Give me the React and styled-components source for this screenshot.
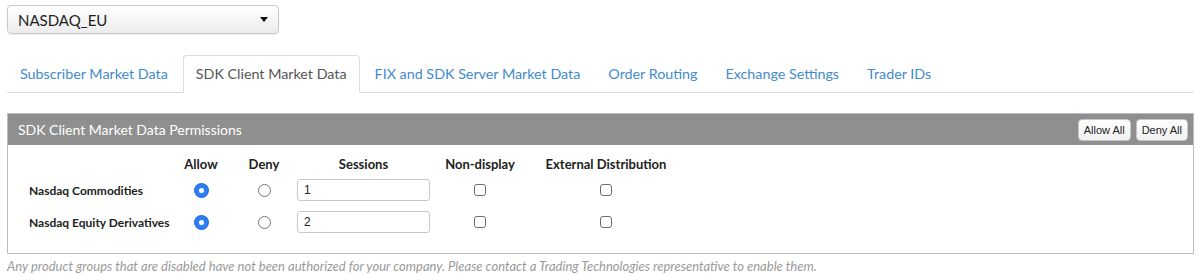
import React, { useState } from "react";
import styled, { createGlobalStyle } from "styled-components";

const GlobalStyle = createGlobalStyle`
  body {
    margin: 0;
    background: #fff;
    font-family: Lato, "Open Sans", sans-serif;
    color: #333;
  }
`;

const Page = styled.div`
  padding: 5px 5px 0 7px;
`;

const Select = styled.div`
  width: 272px;
  height: 29px;
  box-sizing: border-box;
  border: 1px solid #c8c8c8;
  border-radius: 4px;
  background: linear-gradient(#ffffff, #ececec);
  box-shadow: 0 1px 1px rgba(0, 0, 0, 0.08);
  display: flex;
  align-items: center;
  justify-content: space-between;
  padding: 0 10px 0 10px;
  font-size: 15px;
  color: #222;
`;

const Caret = styled.span`
  width: 0;
  height: 0;
  border-left: 4.5px solid transparent;
  border-right: 4.5px solid transparent;
  border-top: 5px solid #111;
`;

const Tabs = styled.ul`
  list-style: none;
  margin: 21px 0 0;
  padding: 0;
  display: flex;
  border-bottom: 1px solid #ddd;
`;

const Tab = styled.li`
  margin: 0 2px -1px 0;
  height: 38px;
  box-sizing: border-box;
  padding: 0 12px 2px;
  display: flex;
  align-items: center;
  font-size: 14.3px;
  color: ${(p) => (p.$active ? "#555" : "#3f8bcb")};
  border: 1px solid ${(p) => (p.$active ? "#ddd" : "transparent")};
  border-bottom-color: ${(p) => (p.$active ? "#fff" : "transparent")};
  border-radius: 4px 4px 0 0;
  background: ${(p) => (p.$active ? "#fff" : "transparent")};
  cursor: pointer;
`;

const Panel = styled.div`
  margin-top: 20px;
  border: 1px solid #bdbdbd;
`;

const PanelHeader = styled.div`
  height: 31px;
  background: #8f8f8f;
  display: flex;
  align-items: center;
  justify-content: space-between;
  padding: 0 5px 0 10px;
  color: #fff;
  font-size: 14px;
`;

const ButtonGroup = styled.div`
  display: flex;
  gap: 5px;
`;

const SmallButton = styled.button`
  height: 22px;
  padding: 0 5px;
  font-family: "Liberation Sans", Arial, sans-serif;
  font-size: 11px;
  color: #222;
  background: linear-gradient(#ffffff, #f0f0f0);
  border: 1px solid #c4c4c4;
  border-radius: 4px;
`;

const PanelBody = styled.div`
  padding: 9px 0 15px 21px;
`;

const Grid = styled.div`
  display: grid;
  grid-template-columns: 142px 60px 66px 133px 100px 152px;
  grid-auto-rows: 32px;
  grid-template-rows: 20px;
  align-items: center;
  font-size: 12px;
`;

const HeadCell = styled.div`
  text-align: center;
  font-weight: 700;
  font-size: 13px;
  color: #222;
`;

const Label = styled.div`
  font-weight: 700;
  color: #222;
`;

const Center = styled.div`
  display: flex;
  justify-content: center;
`;

const Radio = styled.span`
  width: 13px;
  height: 13px;
  box-sizing: border-box;
  border-radius: 50%;
  border: ${(p) => (p.$checked ? "4px solid #2e7cf6" : "1px solid #777")};
  background: #fff;
  box-shadow: ${(p) => (p.$checked ? "0 0 0 1px #2a6fd6" : "none")};
`;

const Checkbox = styled.span`
  width: 12px;
  height: 12px;
  box-sizing: border-box;
  border: 1px solid #6f6f6f;
  border-radius: 3px;
  background: #fff;
`;

const Input = styled.div`
  width: 134px;
  height: 22px;
  box-sizing: border-box;
  border: 1px solid #c9c9c9;
  border-radius: 3px;
  padding: 0 6px;
  display: flex;
  align-items: center;
  font-family: "Liberation Sans", Arial, sans-serif;
  font-size: 12px;
  color: #222;
`;

const Note = styled.p`
  margin: 4px 0 0;
  font-size: 13px;
  font-style: italic;
  color: #9a9a9a;
`;

const tabs = [
  "Subscriber Market Data",
  "SDK Client Market Data",
  "FIX and SDK Server Market Data",
  "Order Routing",
  "Exchange Settings",
  "Trader IDs",
];

const rows = [
  { name: "Nasdaq Commodities", sessions: "1" },
  { name: "Nasdaq Equity Derivatives", sessions: "2" },
];

export default function App() {
  const [active, setActive] = useState(1);
  return (
    <Page>
      <GlobalStyle />
      <Select>
        NASDAQ_EU
        <Caret />
      </Select>
      <Tabs>
        {tabs.map((t, i) => (
          <Tab key={t} $active={i === active} onClick={() => setActive(i)}>
            {t}
          </Tab>
        ))}
      </Tabs>
      <Panel>
        <PanelHeader>
          SDK Client Market Data Permissions
          <ButtonGroup>
            <SmallButton>Allow All</SmallButton>
            <SmallButton>Deny All</SmallButton>
          </ButtonGroup>
        </PanelHeader>
        <PanelBody>
          <Grid>
            <div />
            <HeadCell>Allow</HeadCell>
            <HeadCell>Deny</HeadCell>
            <HeadCell>Sessions</HeadCell>
            <HeadCell>Non-display</HeadCell>
            <HeadCell>External Distribution</HeadCell>
            {rows.map((r) => (
              <React.Fragment key={r.name}>
                <Label>{r.name}</Label>
                <Center>
                  <Radio $checked />
                </Center>
                <Center>
                  <Radio />
                </Center>
                <Center>
                  <Input>{r.sessions}</Input>
                </Center>
                <Center>
                  <Checkbox />
                </Center>
                <Center>
                  <Checkbox />
                </Center>
              </React.Fragment>
            ))}
          </Grid>
        </PanelBody>
      </Panel>
      <Note>
        Any product groups that are disabled have not been authorized for your
        company. Please contact a Trading Technologies representative to enable
        them.
      </Note>
    </Page>
  );
}
